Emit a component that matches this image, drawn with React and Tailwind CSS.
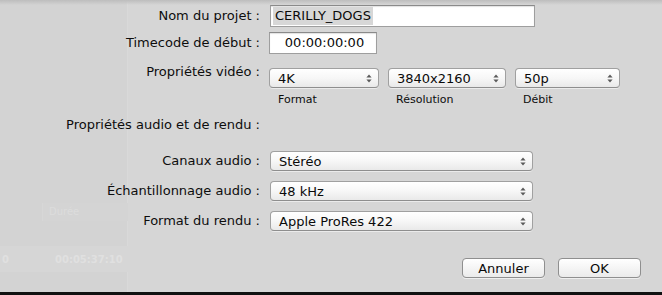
import React from "react";

function Arrows() {
  return (
    <svg width="6" height="9" viewBox="0 0 6 9" className="shrink-0">
      <path d="M3 0.5 L5.6 3.4 L0.4 3.4 Z" fill="#5a5a5a" />
      <path d="M3 8.5 L5.6 5.6 L0.4 5.6 Z" fill="#5a5a5a" />
    </svg>
  );
}

function Popup({ value, w }) {
  return (
    <div
      className={`${w} h-[20px] flex items-center justify-between pl-[8px] pr-[6px] rounded-[4px] border border-[#a0a0a0] border-b-[#8e8e8e] bg-gradient-to-b from-white via-[#f7f7f7] to-[#e9e9e9] shadow-[0_1px_0_rgba(255,255,255,0.5)] text-[13px] leading-none text-[#0a0a0a]`}
    >
      <span>{value}</span>
      <Arrows />
    </div>
  );
}

function Label({ children, className = "" }) {
  return (
    <div className={`w-[260px] shrink-0 text-right text-[13px] leading-[16px] text-[#0d0d0d] ${className}`}>
      {children}
    </div>
  );
}

export default function App() {
  return (
    <div className="relative w-[662px] h-[295px] overflow-hidden bg-[#d6d6d6] font-['DejaVu_Sans',sans-serif]">
      {/* underlying window showing through at left */}
      <div className="absolute left-0 top-0 w-[128px] h-[292px] bg-[#d3d3d3] border-r border-[#d9d9d9]">
        <div className="absolute left-[42px] top-[203px] w-[86px] h-[18px] bg-[#d4d4d4] border-l border-[#d7d7d7] text-[10px] text-[#dcdcdc] pl-[6px] leading-[18px]">
          Durée
        </div>
        <div className="absolute left-0 top-[246px] w-[128px] h-[26px] bg-[#d6d6d6] flex items-center text-[10px] font-bold text-[#e0e0e0]">
          <span className="pl-[2px]">0</span>
          <span className="pl-[46px]">00:05:37:10</span>
        </div>
      </div>
      {/* top shadow */}
      <div className="absolute left-0 top-0 w-full h-[5px] bg-gradient-to-b from-[#bdbdbd] to-transparent" />

      {/* dialog content */}
      <div className="relative flex flex-col pt-[5px]">
        <div className="flex items-center gap-[10px] h-[22px]">
          <Label>Nom du projet :</Label>
          <div className="w-[265px] h-[22px] border border-[#9e9e9e] border-t-[#8a8a8a] bg-white flex items-center pl-[2px] shadow-[inset_0_1px_1px_rgba(0,0,0,0.12)]">
            <span className="bg-[#d7d7d7] px-[2px] h-[18px] flex items-center text-[13px] text-[#0a0a0a]">
              CERILLY_DOGS
            </span>
          </div>
        </div>

        <div className="flex items-center gap-[9px] h-[22px] mt-[5px]">
          <Label>Timecode de début :</Label>
          <div className="w-[108px] h-[22px] border border-[#9e9e9e] border-t-[#8a8a8a] bg-white flex items-center justify-center shadow-[inset_0_1px_1px_rgba(0,0,0,0.12)] text-[13px] text-[#0a0a0a] pl-[3px]">
            00:00:00:00
          </div>
        </div>

        <div className="flex items-start gap-[9px] mt-[10px]">
          <Label>Propriétés vidéo :</Label>
          <div className="flex gap-[9px] mt-[4px]">
            <div className="flex flex-col">
              <Popup value="4K" w="w-[110px]" />
              <div className="text-[11px] leading-[14px] mt-[5px] pl-[9px] text-[#0d0d0d]">Format</div>
            </div>
            <div className="flex flex-col">
              <Popup value="3840x2160" w="w-[118px]" />
              <div className="text-[11px] leading-[14px] mt-[5px] pl-[8px] text-[#0d0d0d]">Résolution</div>
            </div>
            <div className="flex flex-col">
              <Popup value="50p" w="w-[105px]" />
              <div className="text-[11px] leading-[14px] mt-[5px] pl-[8px] text-[#0d0d0d]">Débit</div>
            </div>
          </div>
        </div>

        <div className="flex mt-[10px]">
          <Label>Propriétés audio et de rendu :</Label>
        </div>

        <div className="flex items-center gap-[10px] h-[20px] mt-[18px]">
          <Label>Canaux audio :</Label>
          <Popup value="Stéréo" w="w-[263px]" />
        </div>
        <div className="flex items-center gap-[10px] h-[20px] mt-[10px]">
          <Label>Échantillonnage audio :</Label>
          <Popup value="48 kHz" w="w-[263px]" />
        </div>
        <div className="flex items-center gap-[10px] h-[20px] mt-[10px]">
          <Label>Format du rendu :</Label>
          <Popup value="Apple ProRes 422" w="w-[263px]" />
        </div>

        <div className="flex justify-end gap-[13px] pr-[21px] mt-[27px]">
          <button className="w-[83px] h-[20px] rounded-[4px] border border-[#8f8f8f] bg-gradient-to-b from-white to-[#ebebeb] text-[13px] leading-none text-[#0a0a0a] shadow-[0_1px_0_rgba(255,255,255,0.6)]">
            Annuler
          </button>
          <button className="w-[83px] h-[20px] rounded-[4px] border border-[#8f8f8f] bg-gradient-to-b from-white to-[#ebebeb] text-[13px] leading-none text-[#0a0a0a] shadow-[0_1px_0_rgba(255,255,255,0.6)]">
            OK
          </button>
        </div>
      </div>

      {/* bottom black edge */}
      <div className="absolute left-0 bottom-0 w-full h-[3px] bg-[#111]" />
    </div>
  );
}
